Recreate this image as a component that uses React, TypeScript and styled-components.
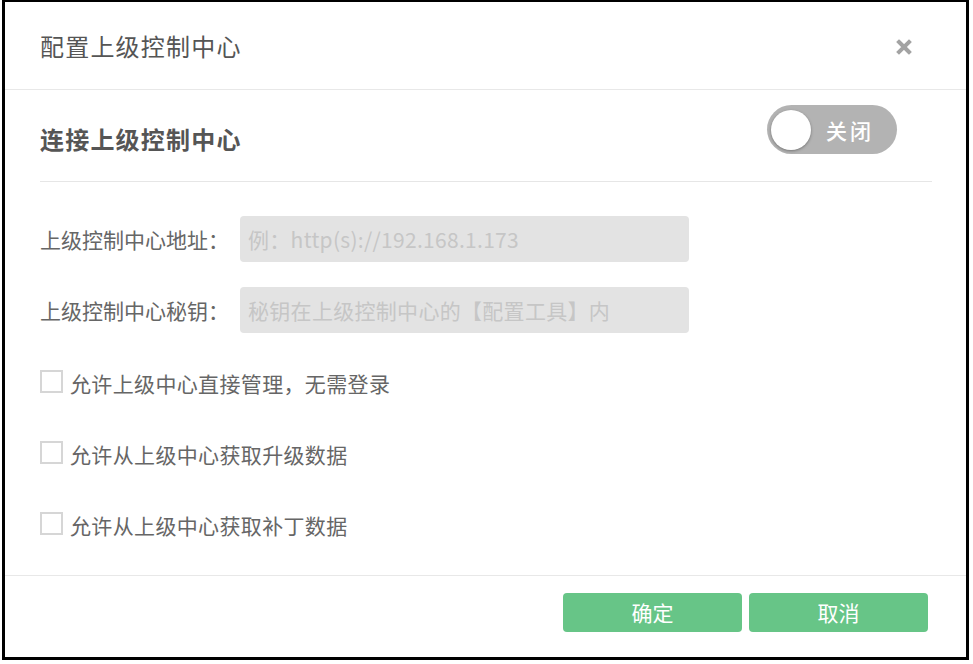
import React from "react";
import styled, { createGlobalStyle } from "styled-components";

const Global = createGlobalStyle`
  html, body { margin: 0; padding: 0; background: #ffffff; }
  body { font-family: "Noto Sans CJK SC", "Noto Sans", sans-serif; }
  * { box-sizing: border-box; }
`;

const Frame = styled.div`
  margin: -1px 0 0 2px;
  width: 967px;
  height: 661px;
  border: 3px solid #000;
  background: #fff;
  display: flex;
  flex-direction: column;
`;

const Header = styled.div`
  height: 88px;
  flex: none;
  display: flex;
  align-items: center;
  justify-content: space-between;
  padding: 0 54px 0 35px;
  border-bottom: 1px solid #e8e8e8;
`;

const Title = styled.h1`
  margin: 0;
  font-size: 24px;
  letter-spacing: 1.2px;
  font-weight: 400;
  color: #555;
  line-height: 30px;
`;

const Close = styled.button`
  border: 0;
  background: none;
  padding: 0;
  width: 16px;
  height: 16px;
  display: flex;
  cursor: pointer;
  margin-top: 2px;
`;

const Body = styled.div`
  flex: 1;
  padding: 0 34px 0 35px;
  display: flex;
  flex-direction: column;
`;

const SectionHead = styled.div`
  height: 92px;
  flex: none;
  display: flex;
  justify-content: space-between;
  align-items: flex-start;
  padding: 15px 35px 0 0;
  border-bottom: 1px solid #e6e6e6;
`;

const Heading = styled.h2`
  margin: 21px 0 0;
  font-size: 24px;
  letter-spacing: 1.2px;
  font-weight: 700;
  color: #555;
  line-height: 26px;
`;

const Toggle = styled.button`
  width: 130px;
  height: 49px;
  border-radius: 25px;
  border: 0;
  background: #b3b3b3;
  display: flex;
  align-items: center;
  padding: 0 0 0 4px;
  cursor: pointer;
  font-family: inherit;
`;

const Knob = styled.span`
  width: 40px;
  height: 40px;
  border-radius: 50%;
  background: #fff;
  box-shadow: 0 1px 3px rgba(0, 0, 0, 0.35);
  flex: none;
`;

const ToggleText = styled.span`
  margin-left: 15px;
  font-size: 21px;
  letter-spacing: 3px;
  color: #fff;
  font-weight: 500;
`;

const Form = styled.div`
  padding-top: 34px;
  display: flex;
  flex-direction: column;
  gap: 25px;
`;

const Row = styled.div`
  display: flex;
  align-items: center;
`;

const Label = styled.label`
  width: 200px;
  flex: none;
  font-size: 21px;
  color: #666;
`;

const Input = styled.input`
  width: 449px;
  height: 46px;
  border: 0;
  border-radius: 4px;
  background: #e3e3e3;
  padding: 0 8px;
  font-family: inherit;
  font-size: 21px;
  letter-spacing: 0.3px;
  color: #555;
  outline: none;
  &::placeholder { color: #c6c6c6; }
`;

const Checks = styled.div`
  padding-top: 36px;
  display: flex;
  flex-direction: column;
  gap: 47px;
`;

const CheckRow = styled.label`
  display: flex;
  align-items: center;
  height: 24px;
  font-size: 21px;
  letter-spacing: 0.35px;
  color: #666;
  cursor: pointer;
`;

const Box = styled.span`
  width: 23px;
  height: 23px;
  border: 2px solid #d6d6d6;
  background: #fff;
  flex: none;
  margin-right: 7px;
`;

const CheckText = styled.span`
  margin-top: 4px;
`;

const Footer = styled.div`
  margin-top: auto;
  height: 82px;
  flex: none;
  border-top: 1px solid #e8e8e8;
  display: flex;
  justify-content: flex-end;
  align-items: flex-start;
  gap: 7px;
  padding: 17px 38px 0 0;
`;

const Button = styled.button`
  width: 179px;
  height: 39px;
  border: 0;
  border-radius: 4px;
  background: #67c587;
  color: #fff;
  font-family: inherit;
  font-size: 21px;
  cursor: pointer;
  line-height: 39px;
  padding: 0;
`;

export default function App() {
  return (
    <>
      <Global />
      <Frame>
        <Header>
          <Title>配置上级控制中心</Title>
          <Close aria-label="关闭">
            <svg width="16" height="16" viewBox="0 0 16 16">
              <path d="M3 3 L13 13 M13 3 L3 13" stroke="#a3a3a3" strokeWidth="4" strokeLinecap="square" />
            </svg>
          </Close>
        </Header>
        <Body>
          <SectionHead>
            <Heading>连接上级控制中心</Heading>
            <Toggle>
              <Knob />
              <ToggleText>关闭</ToggleText>
            </Toggle>
          </SectionHead>
          <Form>
            <Row>
              <Label>上级控制中心地址：</Label>
              <Input placeholder="例：http(s)://192.168.1.173" />
            </Row>
            <Row>
              <Label>上级控制中心秘钥：</Label>
              <Input placeholder="秘钥在上级控制中心的【配置工具】内" />
            </Row>
          </Form>
          <Checks>
            <CheckRow><Box /><CheckText>允许上级中心直接管理，无需登录</CheckText></CheckRow>
            <CheckRow><Box /><CheckText>允许从上级中心获取升级数据</CheckText></CheckRow>
            <CheckRow><Box /><CheckText>允许从上级中心获取补丁数据</CheckText></CheckRow>
          </Checks>
        </Body>
        <Footer>
          <Button>确定</Button>
          <Button>取消</Button>
        </Footer>
      </Frame>
    </>
  );
}
